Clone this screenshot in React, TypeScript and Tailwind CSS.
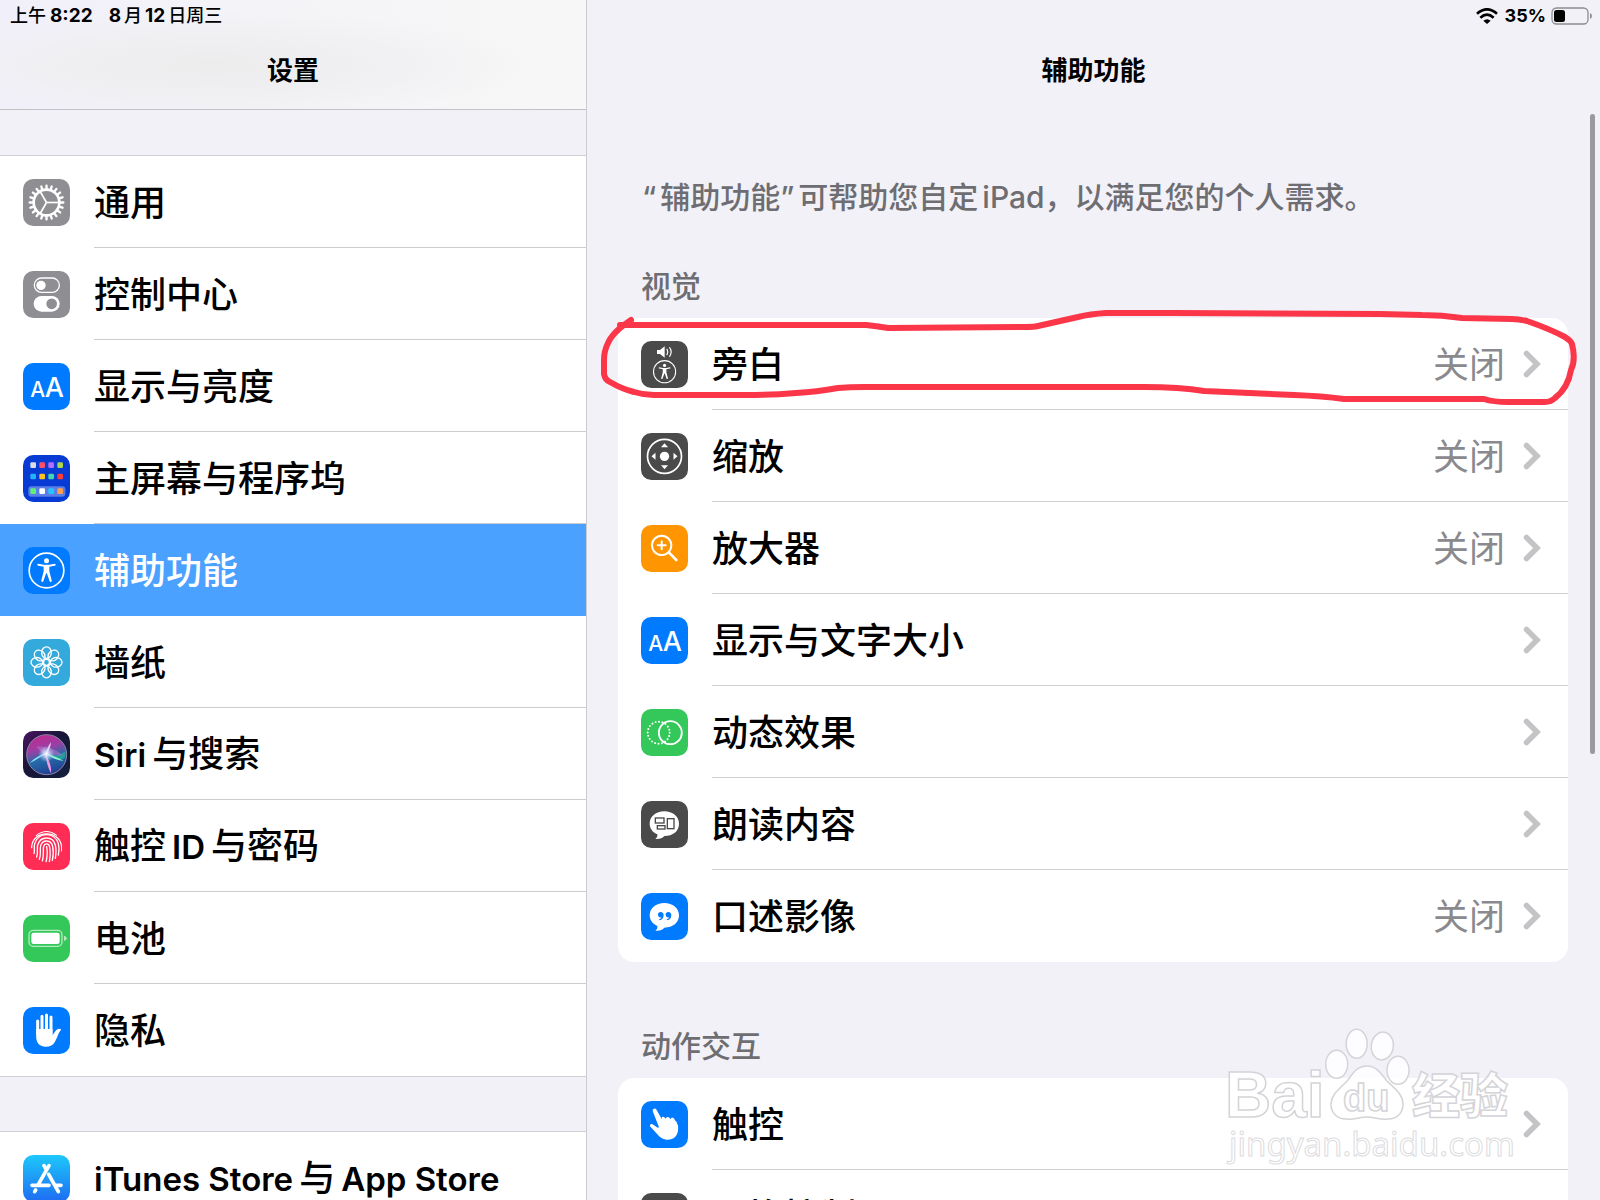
import type { ReactNode } from 'react';

type IconName =
  | 'gear' | 'switches' | 'textSize' | 'home' | 'access' | 'flower' | 'siri' | 'finger' | 'battery' | 'hand'
  | 'store' | 'voice' | 'zoom' | 'magnify' | 'motion' | 'spoken' | 'quote' | 'touch' | 'switchControl';

type Item = { icon: IconName; label: string[]; value?: string; active?: boolean };

const BLUE = '#007aff';
const GRAY = '#8e8e93';
const DARK = '#4a4a4a';

function Tile({ bg, children }: { bg: string; children?: ReactNode }) {
  return (
    <svg viewBox="0 0 141 141" className="size-[47px] shrink-0" aria-hidden="true">
      <rect width="141" height="141" rx="31" fill={bg} />
      {children}
    </svg>
  );
}

function Person({ ring = 52 }: { ring?: number }) {
  return (
    <>
      <circle cx="70.5" cy="70.5" r={ring} fill="none" stroke="#fff" strokeWidth="5" />
      <circle cx="70.5" cy="41" r="7.5" fill="#fff" />
      <path
        d="M46 50 62 53Q70.500 54 79 53L95 50Q98 50 98 53T95 56L79 59V73L86 100Q87 104 84 105T80 103L71.500 79H69.500L61 103Q60 106 57 105T55 100L62 73V59L46 56Q43 56 43 53T46 50Z"
        fill="#fff"
      />
    </>
  );
}

function BigSmallA() {
  return (
    <Tile bg={BLUE}>
      <g fill="#fff" fontFamily="Inter, sans-serif" fontWeight="500">
        <text x="22" y="101" fontSize="63">A</text>
        <text x="65" y="101" fontSize="81">A</text>
      </g>
    </Tile>
  );
}

const HOME_DOTS = [
  [31, '#dcdce4', '#ff5068', '#b56cff', '#a9d84c'],
  [65, '#1fb6ff', '#ffc31f', '#40d7aa', '#ff3d3a'],
  [109, '#5ff075', '#ffffff', '#24c6ff', '#ff9f4a'],
] as const;

const BUBBLE = 'M70 28C95 28 114 43 114 65S96 102 70 102C65 109 55 112 43 111C48 107 50 103 49 97C35 91 26 79 26 65C26 43 45 28 70 28Z';

function Icon({ name }: { name: IconName }) {
  switch (name) {
    case 'gear':
      return (
        <Tile bg={GRAY}>
          <g stroke="#fff" fill="none" transform="translate(70.5 70.5)">
            <circle r="38.500" strokeWidth="8" />
            {Array.from({ length: 20 }, (_, i) => (
              <path key={i} d="M42 0H50.500" strokeWidth="7" strokeLinecap="round" transform={`rotate(${i * 18})`} />
            ))}
            {[0, 120, 240].map((a) => (
              <path key={a} d="M0 0H38" strokeWidth="5" transform={`rotate(${a})`} />
            ))}
          </g>
        </Tile>
      );
    case 'switches':
      return (
        <Tile bg={GRAY}>
          <rect x="34" y="21" width="75" height="43" rx="21.500" fill="none" stroke="#fff" strokeWidth="4" />
          <circle cx="54" cy="43" r="14" fill="#fff" />
          <rect x="32" y="75" width="78" height="47" rx="23.500" fill="#fff" />
          <circle cx="86" cy="98.500" r="16" fill={GRAY} />
        </Tile>
      );
    case 'textSize':
      return <BigSmallA />;
    case 'home':
      return (
        <Tile bg="#083bd4">
          <rect x="16" y="94" width="111" height="31" rx="9" fill="#5a7ee6" />
          {HOME_DOTS.map(([y, ...colors]) =>
            colors.map((c, i) => <rect key={`${y}-${i}`} x={22 + i * 27} y={y - 9} width="17" height="17" rx="4" fill={c} />),
          )}
        </Tile>
      );
    case 'access':
      return (
        <Tile bg={BLUE}>
          <Person />
        </Tile>
      );
    case 'flower':
      return (
        <Tile bg="#34aadc">
          <g transform="translate(70.5 70)" fill="none" stroke="#fff" strokeWidth="4">
            {Array.from({ length: 8 }, (_, i) => (
              <ellipse key={i} cy="-29" rx="14.500" ry="17.500" transform={`rotate(${i * 45})`} />
            ))}
            <circle r="9" />
          </g>
        </Tile>
      );
    case 'siri':
      return (
        <Tile bg="url(#siri-bg)">
          <defs>
            <linearGradient id="siri-bg" x1="0" y1="0" x2="1" y2="1">
              <stop offset="0" stopColor="#4a1460" />
              <stop offset="0.45" stopColor="#171638" />
              <stop offset="1" stopColor="#14203f" />
            </linearGradient>
            <linearGradient id="siri-orb" x1="0.3" y1="0" x2="0.6" y2="1">
              <stop offset="0" stopColor="#c02890" />
              <stop offset="0.35" stopColor="#9a3fa4" />
              <stop offset="0.6" stopColor="#256ba8" />
              <stop offset="1" stopColor="#223d92" />
            </linearGradient>
            <radialGradient id="siri-core">
              <stop offset="0" stopColor="#fff" />
              <stop offset="0.4" stopColor="#d5e9ff" stopOpacity="0.7" />
              <stop offset="1" stopColor="#8fc8ff" stopOpacity="0" />
            </radialGradient>
          </defs>
          <circle cx="71" cy="71" r="60" fill="url(#siri-orb)" stroke="#8b86a8" strokeWidth="3" />
          <path d="M70 68C86 76 110 74 126 62 132 86 116 98 70 68Z" fill="#22b39b" opacity="0.7" />
          <path d="M40 47C60 44 100 52 120 74 96 72 60 76 40 47Z" fill="#b56fc4" opacity="0.6" />
          <path d="M72 66C58 74 32 92 20 96 36 80 54 70 72 66Z" fill="#7de6ff" />
          <path d="M68 66C88 74 108 80 122 90 100 88 82 80 68 66Z" fill="#8df0cf" />
          <path d="M66 66C78 86 86 106 84 126 74 110 70 88 66 66Z" fill="#f09be0" />
          <path d="M84 34C82 48 78 60 68 74 70 58 76 44 84 34Z" fill="#f3d9ff" />
          <circle cx="70" cy="69" r="25" fill="url(#siri-core)" />
        </Tile>
      );
    case 'finger':
      return (
        <Tile bg="#ff2d55">
          <clipPath id="finger-clip">
            <circle cx="71" cy="71" r="47" />
          </clipPath>
          <g fill="none" stroke="#fff" strokeWidth="4" strokeLinecap="round" clipPath="url(#finger-clip)">
            <path d="M40 37Q69 14 100 36" />
            <path d="M26 74C25 20 114 18 116 74V84" />
            <path d="M33 92C36 82 32 74 35 62 46 26 96 26 106 62 110 76 108 88 106 96" />
            <path d="M41 102C46 88 41 78 44 66 52 38 90 38 97 66 101 82 99 94 97 106" />
            <path d="M49 109C55 94 50 80 53 68 59 49 84 49 89 70 92 84 91 98 88 112" />
            <path d="M58 114C64 98 59 84 62 70 65 60 78 60 80 72 83 88 82 100 79 117" />
            <path d="M71 71C74 88 74 98 69 118" />
          </g>
        </Tile>
      );
    case 'battery':
      return (
        <Tile bg="#34c759">
          <rect x="18" y="46" width="99" height="48" rx="13" fill="none" stroke="#b4ebc1" strokeWidth="4" />
          <rect x="25" y="53" width="85" height="34" rx="7" fill="#fff" />
          <path d="M123 62Q131 64 131 70T123 78Z" fill="#b4ebc1" />
        </Tile>
      );
    case 'hand':
      return (
        <Tile bg={BLUE}>
          <g stroke="#fff" strokeWidth="9" strokeLinecap="round">
            <path d="M44 42V80M57 28V76M70.500 24V76M84 30V78" />
          </g>
          <path d="M39.500 66H88.500V84C94 79 98 67 107 65Q115 65 114 69C107 75 103 92 96 104Q88 119 68 119C48 119 39.500 106 39.500 88Z" fill="#fff" />
        </Tile>
      );
    case 'store':
      return (
        <Tile bg="url(#store-bg)">
          <defs>
            <linearGradient id="store-bg" x1="0" y1="0" x2="0" y2="1">
              <stop offset="0" stopColor="#1ec8fb" />
              <stop offset="1" stopColor="#1d6cf2" />
            </linearGradient>
          </defs>
          <g stroke="#fff" strokeWidth="11" strokeLinecap="round" fill="none">
            <path d="M78 32 46 88M63 32 70 44M77 58 106 110M27 91H78M100 91H114M38 105 35 110" />
          </g>
        </Tile>
      );
    case 'voice':
      return (
        <Tile bg={DARK}>
          <path d="M48 27H57L71 16V50L57 39H48Z" fill="#fff" />
          <path d="M78 25Q83 33 78 41M86 20Q95 33 86 46" fill="none" stroke="#fff" strokeWidth="3.500" strokeLinecap="round" />
          <g transform="translate(25.6 47) scale(0.64)">
            <Person />
          </g>
        </Tile>
      );
    case 'zoom':
      return (
        <Tile bg={DARK}>
          <circle cx="70.500" cy="70" r="51" fill="none" stroke="#fff" strokeWidth="5" />
          <circle cx="70.500" cy="70" r="14" fill="#fff" />
          {[0, 90, 180, 270].map((a) => (
            <path key={a} d="M60 43 70.500 31 81 43Z" fill="#fff" transform={`rotate(${a} 70.5 70)`} />
          ))}
        </Tile>
      );
    case 'magnify':
      return (
        <Tile bg="#ff9500">
          <g fill="none" stroke="#fff" strokeLinecap="round">
            <circle cx="62" cy="61" r="29" strokeWidth="6" />
            <path d="M84 83 106 105" strokeWidth="8" />
            <path d="M50 61H74M62 49V73" strokeWidth="6" />
          </g>
        </Tile>
      );
    case 'motion':
      return (
        <Tile bg="#34c759">
          <circle cx="88" cy="71" r="34.500" fill="none" stroke="#fff" strokeWidth="5.500" />
          <circle cx="53" cy="71" r="33" fill="none" stroke="#fff" strokeWidth="6" strokeLinecap="round" strokeDasharray="0.1 10.267" />
        </Tile>
      );
    case 'spoken':
      return (
        <Tile bg={DARK}>
          <path d={BUBBLE} fill="#fff" transform="translate(0 3)" />
          <g fill="none" stroke={DARK} strokeWidth="4">
            <rect x="43" y="51" width="26" height="15" />
            <rect x="79" y="53" width="20" height="30" />
            <rect x="49" y="74" width="23" height="10" />
          </g>
        </Tile>
      );
    case 'quote':
      return (
        <Tile bg={BLUE}>
          <path d={BUBBLE} fill="#fff" transform="translate(0 2)" />
          <g fill={BLUE}>
            <path d="M59 57C65 57 68 61 68 67 68 75 63 81 55 82L54 79C58 78 61 76 61 73 55 74 51 70 51 65S54 57 59 57Z" />
            <path d="M82 57C88 57 91 61 91 67 91 75 86 81 78 82L77 79C81 78 84 76 84 73 78 74 74 70 74 65S77 57 82 57Z" />
          </g>
        </Tile>
      );
    case 'touch':
      return (
        <Tile bg={BLUE}>
          <path
            d="M35 30Q34 24 39 23T47 27L62 54Q61 47 66 47T74 53Q76 47 81 48T88 55Q90 48 96 50T101 57Q109 62 111 74C115 104 97 117 77 116C60 115 51 102 41 91L28 77Q25 72 29 70T38 72L50 80 54 79Z"
            fill="#fff"
          />
        </Tile>
      );
    case 'switchControl':
      return (
        <Tile bg={DARK}>
          <rect x="30" y="30" width="34" height="34" rx="5" fill="none" stroke="#fff" strokeWidth="5" />
          <rect x="77" y="30" width="34" height="34" rx="5" fill="#fff" />
          <rect x="30" y="77" width="34" height="34" rx="5" fill="#fff" />
          <rect x="77" y="77" width="34" height="34" rx="5" fill="#fff" />
        </Tile>
      );
  }
}

const SIDEBAR: Item[] = [
  { icon: 'gear', label: ['通用'] },
  { icon: 'switches', label: ['控制中心'] },
  { icon: 'textSize', label: ['显示与亮度'] },
  { icon: 'home', label: ['主屏幕与程序坞'] },
  { icon: 'access', label: ['辅助功能'], active: true },
  { icon: 'flower', label: ['墙纸'] },
  { icon: 'siri', label: ['Siri', '与搜索'] },
  { icon: 'finger', label: ['触控', 'ID', '与密码'] },
  { icon: 'battery', label: ['电池'] },
  { icon: 'hand', label: ['隐私'] },
];

const VISION: Item[] = [
  { icon: 'voice', label: ['旁白'], value: '关闭' },
  { icon: 'zoom', label: ['缩放'], value: '关闭' },
  { icon: 'magnify', label: ['放大器'], value: '关闭' },
  { icon: 'textSize', label: ['显示与文字大小'] },
  { icon: 'motion', label: ['动态效果'] },
  { icon: 'spoken', label: ['朗读内容'] },
  { icon: 'quote', label: ['口述影像'], value: '关闭' },
];

const INTERACTION: Item[] = [
  { icon: 'touch', label: ['触控'] },
  { icon: 'switchControl', label: ['切换控制'] },
];

function Label({ parts }: { parts: string[] }) {
  return (
    <span className="flex items-baseline gap-1.5 pt-[2px] text-[36px] leading-[48px] font-medium whitespace-nowrap">
      {parts.map((p) => (
        <span key={p} className={/^[A-Za-z]/.test(p) ? 'text-[33px] font-semibold' : undefined}>
          {p}
        </span>
      ))}
    </span>
  );
}

function Chevron() {
  return (
    <svg viewBox="0 0 18 28" className="h-7 w-[18px] shrink-0" aria-hidden="true">
      <path d="M3.500 3.500 14 14 3.500 24.500" fill="none" stroke="#c4c4c7" strokeWidth="5.500" strokeLinecap="round" />
    </svg>
  );
}

function SidebarList({ items }: { items: Item[] }) {
  return (
    <ul className="border-y border-[#d0d0d4] bg-white">
      {items.map((item) => (
        <li key={item.icon} className="group">
          <button
            type="button"
            aria-current={item.active ? 'page' : undefined}
            className={`flex h-[92px] w-full items-center gap-6 pl-[23px] text-left ${item.active ? 'bg-[#4ba1ff] text-white' : 'text-black'}`}
          >
            <Icon name={item.icon} />
            <span className={`flex h-full flex-1 items-center border-b group-last:border-transparent ${item.active ? 'border-transparent' : 'border-[#cdcdd0]'}`}>
              <Label parts={item.label} />
            </span>
          </button>
        </li>
      ))}
    </ul>
  );
}

function CardList({ title, items }: { title: string; items: Item[] }) {
  return (
    <section>
      <h2 className="mb-3 pl-[23px] text-[30px] leading-10 font-medium text-[#6d6d72]">{title}</h2>
      <ul className="overflow-hidden rounded-2xl bg-white">
        {items.map((item) => (
          <li key={item.icon} className="group">
            <button type="button" className="flex h-[92px] w-full items-center gap-6 pl-[23px] text-left">
              <Icon name={item.icon} />
              <span className="flex h-full flex-1 items-center justify-between border-b border-[#d0d0d3] pr-[27px] group-last:border-transparent">
                <Label parts={item.label} />
                <span className="flex items-center gap-[18px] text-[36px] leading-[48px] text-[#8a8a8e]">
                  {item.value && <span className="pt-[2px]">{item.value}</span>}
                  <Chevron />
                </span>
              </span>
            </button>
          </li>
        ))}
      </ul>
    </section>
  );
}

function MarkedLoop() {
  return (
    <svg
      viewBox="0 0 980 100"
      preserveAspectRatio="none"
      className="pointer-events-none absolute top-[42px] -left-[18px] h-[100px] w-[calc(100%+30px)]"
      aria-hidden="true"
    >
      <path
        d="M31 12Q24 17 20 20Q11 28 8 35Q4 43 4 52V66Q5 72 10 74Q22 81 34 84Q44 87 54 87H146Q172 87 196 85Q216 84 238 80Q250 79 264 79H544Q580 79 604 83L694 87Q722 88 744 91H830Q866 91 884 91Q893 94 908 94H945Q951 94 955 90Q968 80 971 62Q976 52 972 36Q971 33 965 29Q950 21 927 13Q918 11 912 11L862 10Q842 7 822 7L780 6L573 5H506Q490 6 478 9L438 18Q434 19 425 19L288 20Q276 18 266 17H20"
        fill="none"
        stroke="#fa3648"
        strokeWidth="6"
        strokeLinecap="round"
        strokeLinejoin="round"
      />
    </svg>
  );
}

function Watermark() {
  return (
    <svg
      viewBox="0 0 300 150"
      className="pointer-events-none absolute right-[80px] bottom-[20px] w-[300px] overflow-visible"
      role="img"
      aria-label="Baidu 经验 jingyan.baidu.com"
    >
      <g fill="#fff" fillOpacity="0.8" stroke="#d4d4d8" strokeWidth="1.500">
        <ellipse cx="116.700" cy="34.300" rx="11" ry="14" />
        <ellipse cx="136.700" cy="13.700" rx="10.500" ry="14.500" />
        <ellipse cx="162.300" cy="16" rx="11" ry="14" transform="rotate(8 162.3 16)" />
        <ellipse cx="178" cy="40.300" rx="11" ry="14" />
        <path d="M147 36C157 36 161 44 167 51 174 58 183 64 183 74 183 84 176 89 168 89 160 90 155 87 147 87S134 90 126 89C118 89 111 84 111 74 111 64 121 58 128 50 133 43 137 36 147 36Z" />
        <g fontFamily="'Liberation Sans', sans-serif" fontWeight="700">
          <text x="5" y="87" fontSize="64">Bai</text>
          <text x="123" y="81" fontSize="38">du</text>
        </g>
        <text x="192" y="83" fontSize="48" fontWeight="900" fontFamily="'Noto Sans CJK SC', sans-serif">经验</text>
        <text x="9" y="126" fontSize="33" strokeWidth="1" stroke="#dcdce0" fontFamily="'Noto Sans', sans-serif">jingyan.baidu.com</text>
      </g>
    </svg>
  );
}

export default function App() {
  return (
    <div
      lang="zh-CN"
      className="relative flex h-screen overflow-hidden bg-[#f2f1f7] font-['Inter','Noto_Sans_CJK_SC',sans-serif] text-black"
    >
      <aside className="w-[587px] shrink-0 overflow-hidden border-r border-[#cbcbd0]">
        <header className="h-[110px] border-b border-[#c2c2c6] bg-[radial-gradient(ellipse_at_36%_60%,#ececed_0%,#efeff1_25%,transparent_60%),linear-gradient(90deg,#f1f0fa,#f5f5f7_60%,#f7f7f7)]">
          <div className="flex h-[31px] items-baseline gap-4 pl-[10px] text-[18px] leading-[31px] font-medium">
            <span className="flex items-baseline gap-1">
              <span>上午</span>
              <span className="text-[19px] font-bold">8:22</span>
            </span>
            <span className="flex items-baseline gap-[3px]">
              <span className="text-[19px] font-bold">8</span>
              <span>月</span>
              <span className="text-[19px] font-bold">12</span>
              <span>日周三</span>
            </span>
          </div>
          <h1 className="pt-5 text-center text-[26px] leading-10 font-semibold">设置</h1>
        </header>
        <nav aria-label="设置" className="flex flex-col gap-[54px] pt-[45px]">
          <SidebarList items={SIDEBAR} />
          <SidebarList items={[{ icon: 'store', label: ['iTunes Store', '与', 'App Store'] }]} />
        </nav>
      </aside>

      <main className="relative min-w-0 flex-1 overflow-hidden">
        <header className="h-[110px]">
          <div className="flex h-[31px] items-center justify-end gap-[5px] pr-[8px] text-[18px] font-bold">
            <svg viewBox="0 0 66 48" className="mr-[2px] h-4 w-[22px]" aria-hidden="true">
              <g fill="none" stroke="#000" strokeWidth="8">
                <path d="M3 17Q33-9 63 17" />
                <path d="M13 29Q33 11 53 29" />
              </g>
              <path d="M22 38Q33 29 44 38L33 48Z" />
            </svg>
            <span>35%</span>
            <svg viewBox="0 0 41 18" className="h-[18px] w-[41px]" aria-hidden="true">
              <rect x="1" y="1" width="36" height="16" rx="4.500" fill="none" stroke="#8d8d91" strokeWidth="1.300" />
              <rect x="3" y="3" width="11" height="12" rx="2.500" />
              <path d="M39 6Q41 7 41 9T39 12Z" fill="#8d8d91" />
            </svg>
          </div>
          <h1 className="pt-5 text-center text-[26px] leading-10 font-semibold">辅助功能</h1>
        </header>

        <div className="pt-[65px] pr-8 pl-[31px]">
          <p className="mb-[49px] pl-6 text-[30px] leading-10 font-medium whitespace-nowrap text-[#6d6d72]">
            <span className="mr-1">“</span>辅助功能<span className="mr-1">”</span>可帮助您自定<span className="ml-1">iPad</span>
            <span className="font-['Noto_Sans_CJK_SC']">，</span>以满足您的个人需求。
          </p>
          <div className="relative flex flex-col gap-16">
            <CardList title="视觉" items={VISION} />
            <CardList title="动作交互" items={INTERACTION} />
            <MarkedLoop />
          </div>
        </div>
        <div className="absolute top-[114px] right-[5px] h-[640px] w-[5px] rounded-full bg-[#99999e]" />
      </main>
      <Watermark />
    </div>
  );
}
